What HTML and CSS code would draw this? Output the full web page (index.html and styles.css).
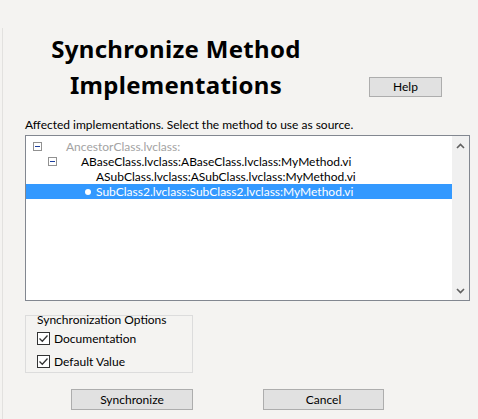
FILE: index.html
```html
<!DOCTYPE html>
<html>
<head>
<meta charset="utf-8">
<link rel="stylesheet" href="styles.css">
</head>
<body>
<div class="window">
  <div class="header">
    <div class="title">Synchronize Method<br>Implementations</div>
    <button class="btn help">Help</button>
  </div>
  <div class="caption">Affected implementations. Select the method to use as source.</div>
  <div class="listbox">
    <div class="rows">
      <div class="row lvl0 disabled">
        <span class="icon"><span class="toggle"></span></span>
        <span class="text">AncestorClass.lvclass:</span>
      </div>
      <div class="row lvl1">
        <span class="icon"><span class="toggle"></span></span>
        <span class="text">ABaseClass.lvclass:ABaseClass.lvclass:MyMethod.vi</span>
      </div>
      <div class="row lvl2">
        <span class="icon"></span>
        <span class="text">ASubClass.lvclass:ASubClass.lvclass:MyMethod.vi</span>
      </div>
      <div class="row lvl2 selected">
        <span class="icon"><span class="bullet"></span></span>
        <span class="text">SubClass2.lvclass:SubClass2.lvclass:MyMethod.vi</span>
      </div>
    </div>
    <div class="scrollbar">
      <svg class="arrow" width="9" height="6" viewBox="0 0 9 6"><path d="M1 5 L4.5 1.5 L8 5" fill="none" stroke="#606060" stroke-width="1.6"/></svg>
      <svg class="arrow" width="9" height="6" viewBox="0 0 9 6"><path d="M1 1 L4.5 4.5 L8 1" fill="none" stroke="#606060" stroke-width="1.6"/></svg>
    </div>
  </div>
  <div class="group">
    <div class="group-title">Synchronization Options</div>
    <label class="check"><span class="box"><svg width="11" height="11" viewBox="0 0 11 11"><path d="M1.5 5.5 L4.3 8.3 L9.5 2.5" fill="none" stroke="#333" stroke-width="1.3"/></svg></span>Documentation</label>
    <label class="check"><span class="box"><svg width="11" height="11" viewBox="0 0 11 11"><path d="M1.5 5.5 L4.3 8.3 L9.5 2.5" fill="none" stroke="#333" stroke-width="1.3"/></svg></span>Default Value</label>
  </div>
  <div class="actions">
    <button class="btn sync">Synchronize</button>
    <button class="btn cancel">Cancel</button>
  </div>
</div>
</body>
</html>
```

FILE: styles.css
```css
html, body {
  margin: 0;
  padding: 0;
  background: #f4f3f1;
}
body {
  width: 478px;
  height: 419px;
  overflow: hidden;
  font-family: Lato, "Noto Sans", sans-serif;
  font-size: 12px;
  color: #000;
}
.window {
  margin: 28px 0 0 2px;
  border-left: 1px solid #e2e1df;
  height: 391px;
  padding: 3px 0 0 22px;
  box-sizing: border-box;
}
.header {
  display: flex;
  align-items: flex-start;
}
.title {
  width: 302px;
  text-align: center;
  font-family: "Noto Sans", sans-serif;
  font-size: 24px;
  font-weight: bold;
  line-height: 36px;
  letter-spacing: 0.3px;
}
.btn {
  font-family: inherit;
  font-size: 12px;
  background: #e1e1e1;
  border: 1px solid #adadad;
  color: #000;
  padding: 0;
  margin: 0;
  line-height: 16px;
}
.help {
  margin: 46px 0 0 42px;
  width: 73px;
  height: 20px;
}
.caption {
  margin-top: 14px;
  line-height: 15px;
}
.listbox {
  margin-top: 3px;
  width: 445px;
  height: 166px;
  box-sizing: border-box;
  border: 1px solid #828790;
  background: #fff;
  display: flex;
}
.rows {
  flex: 1;
  padding-top: 3px;
}
.row {
  display: flex;
  align-items: center;
  height: 15px;
  line-height: 15px;
  white-space: nowrap;
}
.row.lvl0 { padding-left: 7px; }
.row.lvl1 { padding-left: 22px; }
.row.lvl2 { padding-left: 37px; }
.icon {
  width: 33px;
  height: 15px;
  display: flex;
  align-items: center;
  flex-shrink: 0;
}
.toggle {
  width: 9px;
  height: 9px;
  box-sizing: border-box;
  border: 1px solid #919191;
  background: #fff;
  position: relative;
  display: block;
}
.toggle::after {
  content: "";
  position: absolute;
  left: 1px;
  right: 1px;
  top: 3px;
  height: 1px;
  background: #1c3e9e;
}
.bullet {
  width: 6px;
  height: 6px;
  border-radius: 50%;
  background: #fff;
  margin-left: 22px;
}
.disabled .text { color: #a3a3a3; }
.selected {
  background: #3399ff;
  color: #fff;
}
.scrollbar {
  width: 17px;
  background: #f0f0f0;
  display: flex;
  flex-direction: column;
  justify-content: space-between;
  align-items: center;
  padding: 7px 0 6px;
  box-sizing: border-box;
}
.arrow { display: block; }
.group {
  margin-top: 14px;
  width: 168px;
  height: 58px;
  box-sizing: border-box;
  border: 1px solid #dcdcdc;
  padding: 0 0 0 11px;
}
.group-title {
  line-height: 13px;
  margin-top: -3px;
}
.check {
  display: flex;
  align-items: center;
  height: 23px;
  line-height: 15px;
}
.check:first-of-type { margin-top: 1px; }
.box {
  width: 13px;
  height: 13px;
  box-sizing: border-box;
  border: 1px solid #333;
  background: #fff;
  display: flex;
  align-items: center;
  justify-content: center;
  margin-right: 4px;
}
.box svg { display: block; }
.actions {
  display: flex;
  margin-top: 16px;
  padding-left: 46px;
}
.sync {
  width: 122px;
  height: 21px;
}
.cancel {
  width: 121px;
  height: 21px;
  margin-left: 70px;
}
```
